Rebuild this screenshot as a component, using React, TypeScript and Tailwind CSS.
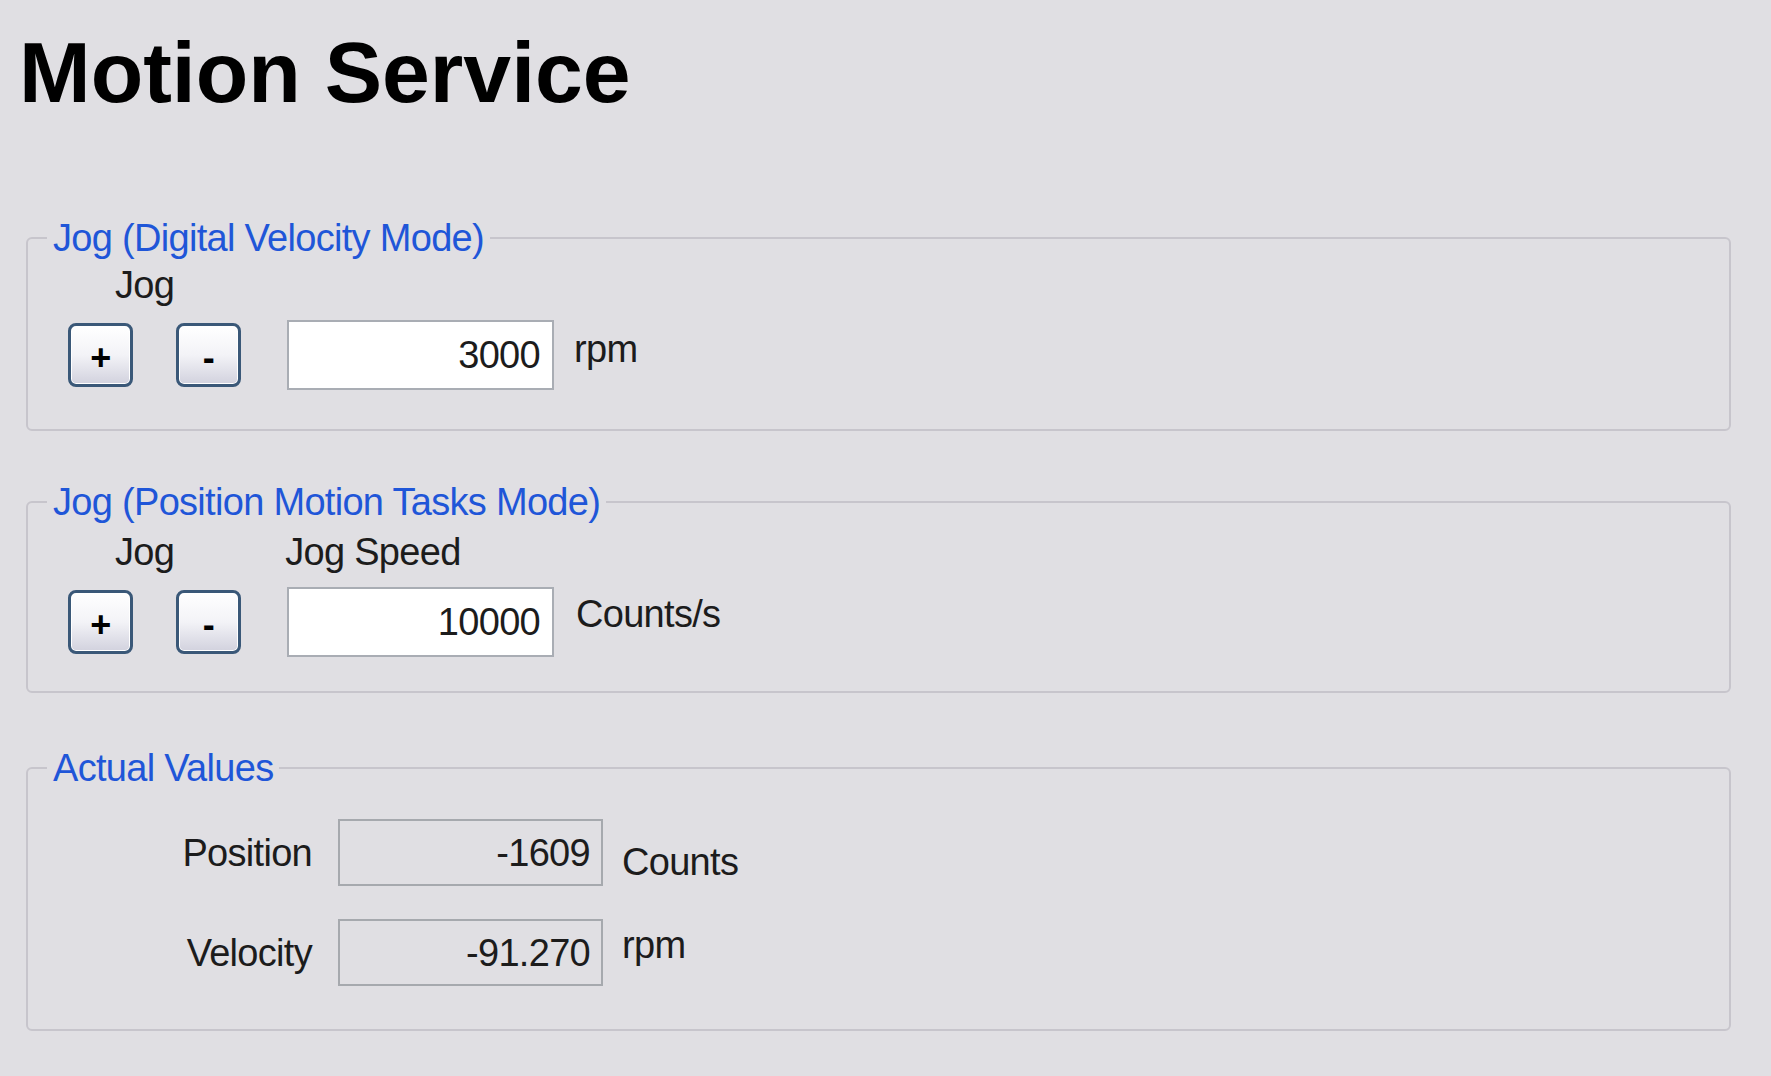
import type { ReactNode } from "react";

function GroupBox({
  title,
  className,
  children,
}: {
  title: string;
  className?: string;
  children: ReactNode;
}) {
  return (
    <fieldset
      className={`rounded-[6px] border-2 border-[#c7c5cc] ${className ?? ""}`}
    >
      <legend className="ml-[19px] px-[6px] text-[38px] leading-[38px] tracking-[-0.7px] text-[#1f56d8]">
        {title}
      </legend>
      {children}
    </fieldset>
  );
}

function JogButton({
  children,
  className,
}: {
  children: ReactNode;
  className?: string;
}) {
  return (
    <button
      type="button"
      className={`flex h-[64px] w-[65px] shrink-0 items-center justify-center rounded-[8px] border-[3px] border-[#3a5878] bg-linear-to-b from-white via-[#f3f3f7] to-[#d2d2de] pt-[6px] text-[36px] font-bold leading-[36px] text-black shadow-[inset_0_0_0_1px_#ffffff] ${className ?? ""}`}
    >
      {children}
    </button>
  );
}

function NumberBox({ value, className }: { value: string; className?: string }) {
  return (
    <input
      type="text"
      defaultValue={value}
      className={`h-[70px] w-[267px] shrink-0 border-2 border-[#a9adb4] bg-white pr-[12px] text-right text-[38px] tracking-[-0.7px] text-[#1c1c1c] outline-none ${className ?? ""}`}
    />
  );
}

function ValueRow({
  label,
  value,
  unit,
  unitClass,
}: {
  label: string;
  value: string;
  unit: string;
  unitClass: string;
}) {
  return (
    <div className="flex h-[67px] items-center">
      <span className="w-[244px] text-right">{label}</span>
      <div className="ml-[26px] flex h-full w-[265px] items-center justify-end border-2 border-[#a6a9ae] pr-[11px]">
        {value}
      </div>
      <span className={`ml-[19px] ${unitClass}`}>{unit}</span>
    </div>
  );
}

export default function App() {
  return (
    <div className="min-h-screen w-full bg-[#e0dfe3] pb-[45px] font-['Liberation_Sans',Arial,sans-serif] text-[38px] leading-[38px] tracking-[-0.7px] text-[#1c1c1c]">
      <h1 className="pl-[19px] pt-[29px] text-[86px] font-bold leading-[86px] tracking-normal text-black">
        Motion Service
      </h1>

      <div className="mt-[104px] flex flex-col pl-[26px] pr-[40px]">
        <GroupBox title="Jog (Digital Velocity Mode)">
          <div className="pb-[39px] pl-[40px] pt-[9px]">
            <div className="ml-[47px]">Jog</div>
            <div className="mt-[16px] flex items-center">
              <JogButton>+</JogButton>
              <JogButton className="ml-[43px]">-</JogButton>
              <NumberBox value="3000" className="ml-[46px]" />
              <span className="mb-[12px] ml-[20px]">rpm</span>
            </div>
          </div>
        </GroupBox>

        <GroupBox title="Jog (Position Motion Tasks Mode)" className="mt-[52px]">
          <div className="pb-[34px] pl-[40px] pt-[12px]">
            <div className="flex">
              <span className="ml-[47px]">Jog</span>
              <span className="ml-[111px]">Jog Speed</span>
            </div>
            <div className="mt-[16px] flex items-center">
              <JogButton>+</JogButton>
              <JogButton className="ml-[43px]">-</JogButton>
              <NumberBox value="10000" className="ml-[46px]" />
              <span className="mb-[16px] ml-[22px]">Counts/s</span>
            </div>
          </div>
        </GroupBox>

        <GroupBox title="Actual Values" className="mt-[56px]">
          <div className="flex flex-col gap-[33px] pb-[43px] pl-[40px] pt-[32px]">
            <ValueRow label="Position" value="-1609" unit="Counts" unitClass="mt-[18px]" />
            <ValueRow label="Velocity" value="-91.270" unit="rpm" unitClass="mb-[16px]" />
          </div>
        </GroupBox>
      </div>
    </div>
  );
}
